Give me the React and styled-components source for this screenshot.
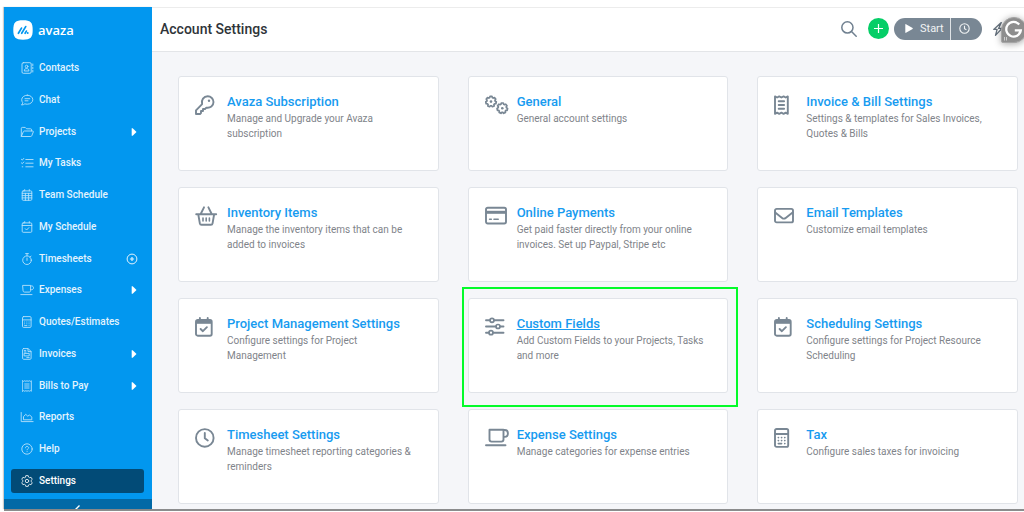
import React from 'react';
import styled, { createGlobalStyle } from 'styled-components';

const GlobalStyle = createGlobalStyle`
  *, *::before, *::after { box-sizing: border-box; }
  body {
    margin: 0;
    background: #ffffff;
    font-family: Roboto, "Liberation Sans", sans-serif;
  }
  button { font: inherit; border: 0; margin: 0; padding: 0; background: none; cursor: pointer; }
  a { text-decoration: none; }
  svg { display: block; flex: none; }
`;

/* ---------- Icons ---------- */

const gear = (cx, cy, outer, inner, teeth) => {
  const pts = [];
  for (let i = 0; i < teeth; i += 1) {
    const a = (i / teeth) * Math.PI * 2 - Math.PI / 2;
    const s = Math.PI / teeth;
    [[-0.72, inner], [-0.42, outer], [0.42, outer], [0.72, inner]].forEach(([k, r]) => {
      pts.push(`${(cx + Math.cos(a + k * s) * r).toFixed(2)} ${(cy + Math.sin(a + k * s) * r).toFixed(2)}`);
    });
  }
  return `M${pts.join('L')}Z`;
};

const NavSvg = styled.svg.attrs({ viewBox: '0 0 14 12', width: 14, height: 12, 'aria-hidden': true })`
  fill: none;
  stroke: #ffffff;
  stroke-width: 0.9;
  stroke-linecap: round;
  stroke-linejoin: round;
  opacity: ${(p) => (p.$bright ? 0.9 : 0.72)};
`;

const navIcons = {
  contacts: (
    <>
      <rect x="2" y="0.7" width="9.2" height="10.6" rx="1.3" />
      <path d="M12.8 2v1.6M12.8 5.2v1.6M12.8 8.4V10" />
      <circle cx="6.6" cy="4.5" r="1.3" />
      <path d="M4.3 8.6c0-1.6 1-2 2.3-2s2.3.4 2.3 2z" />
    </>
  ),
  chat: (
    <>
      <path d="M7.3 1.2c3.1 0 5.5 2 5.5 4.5s-2.4 4.5-5.5 4.5c-.9 0-1.7-.1-2.4-.4-.9.7-2 1.200-3.4 1.200.7-.7 1.200-1.500 1.300-2.300-.7-.8-1.100-1.800-1.100-3 0-2.500 2.500-4.500 5.600-4.500z" />
      <path d="M5 4.700h4.800M5 6.800h3" />
    </>
  ),
  projects: (
    <>
      <path d="M1.300 9.800V2.400c0-.6.4-1 1-1h2.900l1.400 1.400h4c.6 0 1 .4 1 1v1.100" />
      <path d="M1.400 10.300l2-4.700c.2-.4.5-.6.9-.6h8.200c.7 0 1 .5.800 1l-1.600 3.900c-.2.400-.5.6-.9.600H1.900c-.4 0-.6-.2-.5-.5z" />
    </>
  ),
  tasks: <path d="M1.400 2.300l.9.800 1.500-1.700M1.400 5.900l.9.800 1.500-1.700M2.200 9.800h.6M5.800 2.500h7.300M5.800 6.200h7.300M5.800 9.800h7.300" />,
  grid: (
    <>
      <rect x="2.200" y="1.900" width="9.600" height="9.400" rx="1" />
      <path d="M4.700.600v1.300M9.300.600v1.300M2.200 4.300h9.600M2.200 6.600h9.600M2.200 8.900h9.600M5.400 4.300v7M8.600 4.300v7" />
    </>
  ),
  calendar: (
    <>
      <rect x="2.200" y="1.900" width="9.600" height="9.400" rx="1" />
      <path d="M4.700.600v1.300M9.300.600v1.300M2.200 4.500h9.600M5.300 7.700l1.300 1.300 2.300-2.400" />
    </>
  ),
  stopwatch: (
    <>
      <circle cx="7" cy="7.200" r="4.300" />
      <path d="M5.600.600h2.800M7 .600v2.200M7 5v2.400M10.200 4l.8-.9" />
    </>
  ),
  cup: <path d="M3 1.400h7.600v5.200c0 .9-.6 1.500-1.500 1.500H4.500C3.600 8.100 3 7.500 3 6.600zM10.600 1.900h1c1.100 0 1.900.8 1.900 1.900s-.8 1.900-1.900 1.900h-1M.8 10.600h11.200" />,
  calculator: (
    <>
      <rect x="2.500" y=".6" width="8.600" height="10.800" rx="1.100" />
      <path d="M2.500 3.900h8.600M4.600 6h.1M6.800 6h.1M9 6h.1M4.600 7.800h.1M6.800 7.800h.1M9 7.800h.1M4.600 9.600h2.300M9 9.600h.1" />
    </>
  ),
  invoice: (
    <>
      <path d="M3.600.600h4.600l2.900 2.900v6.800c0 .6-.4 1-1 1H3.600c-.6 0-1-.4-1-1V1.600c0-.6.400-1 1-1z" />
      <path d="M8 .800v2.800h2.900M4.300 2.600h1.500M4.500 5.400h4.700v2.500H4.500zM6.800 9.600h2.400M4.500 4h1.500" />
    </>
  ),
  receipt: (
    <>
      <path d="M2.600.700l1.100.7 1.100-.7 1.100.7 1.100-.7 1.100.7 1.100-.7 1.100.7 1-.7v10.600l-1-.7-1.100.7-1.100-.7-1.100.7-1.100-.7-1.100.7-1.100-.7-1.100.7z" />
      <path d="M4.700 4h4.400M4.700 6h4.400M4.700 8h4.400" />
    </>
  ),
  chart: <path d="M1.200 1.500v9.100h11.900M3.500 8.400V5.700l2.200-2.400 2.100 1.900 1.800-1.300 2.200 2.200v2.300z" />,
  help: (
    <>
      <circle cx="7" cy="6" r="5.200" />
      <path d="M5.500 4.800c.1-.9.700-1.400 1.500-1.400s1.600.5 1.600 1.300c0 1-1.500 1.100-1.500 2.100M7.100 8.600v.1" />
    </>
  ),
  settings: (
    <>
      <path d={gear(7, 6, 5.5, 4.2, 6)} />
      <circle cx="7" cy="6" r="1.700" />
    </>
  ),
};

const CardSvg = styled.svg.attrs({ viewBox: '0 0 24 20', width: 24, height: 20, 'aria-hidden': true })`
  fill: none;
  stroke: #798794;
  stroke-width: 1.9;
  stroke-linecap: round;
  stroke-linejoin: round;
  margin-top: 2px;
`;

const cardIcons = {
  key: (
    <>
      <path d="M7.100 9.100C6 5 8.700 1.300 12.700 1.300c3.200 0 5.800 2.500 5.800 5.700 0 3.700-3.300 6.300-7.100 5.600L10 14H8v2H6v2l-1 1H1v-3.700z" />
      <circle cx="14" cy="5.800" r="1.200" fill="#798794" stroke="none" />
    </>
  ),
  gears: (
    <>
      <path d={gear(6, 6.6, 5.3, 4.2, 7)} strokeWidth="1.700" />
      <path d={gear(17.3, 13.2, 5.3, 4.2, 7)} strokeWidth="1.700" />
      <circle cx="6" cy="6.600" r="1.300" fill="#798794" stroke="none" />
      <circle cx="17.300" cy="13.200" r="1.300" fill="#798794" stroke="none" />
    </>
  ),
  receipt: (
    <>
      <path d="M1 1.400l2.100 1.100 2.100-1.100 2.200 1.100 2.200-1.100 2.100 1.100 2.100-1.100v17.400l-2.100-1.100-2.100 1.100-2.200-1.100-2.200 1.100-2.100-1.100L1 18.800z" />
      <path d="M4.700 6.300h5.400M4.700 10h5.400M4.700 13.700h5.400" />
    </>
  ),
  basket: (
    <>
      <path d="M1.200 8.200h20M3.300 8.500l1.500 8.700c.2 1 .8 1.500 1.700 1.500h9.400c.9 0 1.500-.5 1.700-1.500l1.500-8.700M5.700 8L9 1.300M16.700 8l-3.300-6.700" />
      <path d="M8 12v3M11.200 12v3M14.400 12v3" strokeWidth="1.600" />
    </>
  ),
  payment: (
    <>
      <rect x="1" y="1.700" width="20" height="15.800" rx="1.700" />
      <path d="M1 6.300h20" strokeWidth="3" strokeLinecap="butt" />
      <path d="M4.600 13.200h1.700M9 13.200h4.200" strokeWidth="1.600" />
    </>
  ),
  mail: (
    <>
      <rect x="1" y="2.900" width="18" height="13.500" rx="1.700" />
      <path d="M1.200 6.500l6.900 5.400c1.100.9 2.500.9 3.600 0l6.900-5.400" />
    </>
  ),
  calendar: (
    <>
      <rect x="1" y="3" width="15.700" height="15.700" rx="1.700" />
      <path d="M1 4.900h15.700" strokeWidth="3.800" strokeLinecap="butt" />
      <path d="M4.900 1v2M12.700 1v2" />
      <path d="M5.600 12l2.300 2.200 4-4" />
    </>
  ),
  sliders: (
    <>
      <path d="M1 3.300h3.900M9 3.300h9.500M1 9.500h9.900M15 9.500h3.500M1 15.700h3M8 15.700h10.500" />
      <circle cx="7" cy="3.300" r="2" strokeWidth="1.700" />
      <circle cx="13" cy="9.500" r="2" strokeWidth="1.700" />
      <circle cx="6" cy="15.700" r="2" strokeWidth="1.700" />
    </>
  ),
  clock: (
    <>
      <circle cx="9.800" cy="9.900" r="8.800" />
      <path d="M9.800 5v5.300l3 2.200" />
    </>
  ),
  cup: <path d="M4.500 1.700h14v9.800c0 1.200-.9 2.100-2.100 2.100H6.600c-1.200 0-2.100-.9-2.100-2.100zM18.500 2h1.200c1.900 0 3.200 1.300 3.200 3.300 0 2-1.300 3.600-3.200 3.600h-1.200M1 17.300h19.500" />,
  calculator: (
    <>
      <rect x="1" y="1" width="13.200" height="17.900" rx="1.600" />
      <path d="M1 6h13" />
      <path d="M4.300 9.600h.2M7.500 9.600h.2M10.700 9.600h.2M4.300 12.600h.2M7.500 12.600h.2M10.700 12.600h.2M4.300 15.600h3.300M10.700 15.600h.2" strokeWidth="1.600" />
    </>
  ),
};

/* ---------- Shell ---------- */

const Page = styled.div`
  min-height: 100vh;
  display: flex;
  flex-direction: column;
  padding: 7px 0 1px 4px;
`;

const Shell = styled.div`
  flex: 1;
  display: flex;
  background: #f5f6f9;
  border-bottom: 2px solid #8b8c8d;
`;

const Sidebar = styled.aside`
  flex: none;
  width: 148px;
  display: flex;
  flex-direction: column;
  background: #0297ef;
  box-shadow: -1px 0 1px rgba(0, 0, 0, 0.2);
`;

const Brand = styled.a`
  display: flex;
  align-items: center;
  gap: 5px;
  height: 45px;
  padding-left: 9px;
  color: #ffffff;
  font-family: "Open Sans", "Noto Sans", sans-serif;
  font-size: 13px;
  font-weight: 600;
  line-height: 16px;
`;

const Nav = styled.nav`
  flex: 1;
  display: flex;
  flex-direction: column;
  justify-content: space-between;
  padding: 4px 8px 6px 7px;
`;

const NavItem = styled.a`
  display: flex;
  align-items: center;
  gap: 5px;
  height: 24px;
  padding: 0 6px 0 9px;
  border-radius: 3px;
  background: ${(p) => (p.$active ? '#024b77' : 'transparent')};
  color: ${(p) => (p.$active ? '#ffffff' : '#e3f3fd')};
  font-size: 10px;
  font-weight: 500;
  line-height: 16px;
`;

const NavLabel = styled.span`
  flex: 1;
  white-space: nowrap;
`;

const Collapse = styled.button`
  display: flex;
  justify-content: center;
  height: 10px;
  padding-top: 6px;
  background: #0269a6;
  overflow: hidden;
`;

const Main = styled.div`
  flex: 1;
  min-width: 0;
  display: flex;
  flex-direction: column;
`;

const Header = styled.header`
  position: relative;
  display: flex;
  align-items: center;
  justify-content: space-between;
  height: 45px;
  padding: 0 20px 2px 8px;
  background: #ffffff;
  border-top: 1px solid #ececec;
  border-bottom: 1px solid #e3e5e8;
  overflow: hidden;
`;

const Title = styled.h1`
  margin: 0;
  color: #2f3439;
  font-size: 14px;
  font-weight: 500;
  line-height: 20px;
`;

const Tools = styled.div`
  display: flex;
  align-items: center;
`;

const SearchButton = styled.button`
  margin-right: 11px;
`;

const AddButton = styled.button`
  display: grid;
  place-items: center;
  width: 21px;
  height: 21px;
  margin-right: 5px;
  border-radius: 50%;
  background: #05ce67;
`;

const Timer = styled.div`
  display: flex;
  height: 22px;
  margin-right: 10px;
  border-radius: 11px;
  background: #798794;
  overflow: hidden;
`;

const StartButton = styled.button`
  display: flex;
  align-items: center;
  gap: 7px;
  width: 56px;
  padding-left: 11px;
  color: #f1f3f4;
  font-size: 11px;
  line-height: 16px;
`;

const TimerLog = styled.button`
  display: grid;
  place-items: center;
  width: 32px;
  padding-right: 4px;
  border-left: 1px solid #dfe3e6;
`;

const Badge = styled.button`
  position: absolute;
  top: 9px;
  right: -3px;
  width: 26px;
  height: 26px;
  border-radius: 13px 13px 13px 2px;
  background: #8e8e8e;
  border: 1px solid #a5a5a5;
  box-shadow: 0 1px 7px rgba(0, 0, 0, 0.35);
`;

const Cards = styled.main`
  display: grid;
  grid-template-columns: repeat(3, minmax(0, 1fr));
  grid-auto-rows: minmax(95px, auto);
  gap: 16px 29px;
  padding: 24px 6px 4px 26px;
`;

const CardBox = styled.article`
  position: relative;
  display: flex;
  padding: 16px 22px 16px 16px;
  background: #ffffff;
  border: 1px solid #e1e4e9;
  border-radius: 3px;
`;

const CardText = styled.div`
  flex: 1;
  min-width: 0;
  padding-left: 8px;
`;

const CardLink = styled.a`
  display: block;
  color: #179bf0;
  font-size: 13px;
  font-weight: 500;
  line-height: 18px;
  text-decoration: ${(p) => (p.$underlined ? 'underline' : 'none')};
`;

const CardNote = styled.p`
  margin: 0;
  color: #7f848a;
  font-size: 10px;
  line-height: 15px;
`;

const Highlight = styled.div`
  position: absolute;
  inset: -12px -11px -15px -7px;
  border: 2px solid #04fb2a;
  pointer-events: none;
`;

/* ---------- Content ---------- */

const navItems = [
  { label: 'Contacts', icon: 'contacts' },
  { label: 'Chat', icon: 'chat' },
  { label: 'Projects', icon: 'projects', end: 'arrow' },
  { label: 'My Tasks', icon: 'tasks' },
  { label: 'Team Schedule', icon: 'grid' },
  { label: 'My Schedule', icon: 'calendar' },
  { label: 'Timesheets', icon: 'stopwatch', end: 'plus' },
  { label: 'Expenses', icon: 'cup', end: 'arrow' },
  { label: 'Quotes/Estimates', icon: 'calculator' },
  { label: 'Invoices', icon: 'invoice', end: 'arrow' },
  { label: 'Bills to Pay', icon: 'receipt', end: 'arrow' },
  { label: 'Reports', icon: 'chart' },
  { label: 'Help', icon: 'help' },
  { label: 'Settings', icon: 'settings', active: true },
];

const cards = [
  { title: 'Avaza Subscription', note: 'Manage and Upgrade your Avaza subscription', icon: 'key' },
  { title: 'General', note: 'General account settings', icon: 'gears' },
  { title: 'Invoice & Bill Settings', note: 'Settings & templates for Sales Invoices, Quotes & Bills', icon: 'receipt' },
  { title: 'Inventory Items', note: 'Manage the inventory items that can be added to invoices', icon: 'basket' },
  { title: 'Online Payments', note: 'Get paid faster directly from your online invoices. Set up Paypal, Stripe etc', icon: 'payment' },
  { title: 'Email Templates', note: 'Customize email templates', icon: 'mail' },
  { title: 'Project Management Settings', note: 'Configure settings for Project Management', icon: 'calendar' },
  { title: 'Custom Fields', note: 'Add Custom Fields to your Projects, Tasks and more', icon: 'sliders', highlighted: true },
  { title: 'Scheduling Settings', note: 'Configure settings for Project Resource Scheduling', icon: 'calendar' },
  { title: 'Timesheet Settings', note: 'Manage timesheet reporting categories & reminders', icon: 'clock' },
  { title: 'Expense Settings', note: 'Manage categories for expense entries', icon: 'cup' },
  { title: 'Tax', note: 'Configure sales taxes for invoicing', icon: 'calculator' },
];

function NavEnd({ kind }) {
  if (kind === 'plus') {
    return (
      <svg width="12" height="12" viewBox="0 0 12 12" fill="none" stroke="#e3f3fd" aria-hidden="true">
        <circle cx="6" cy="6" r="4.900" />
        <path d="M6 3.900v4.200M3.900 6h4.200" strokeWidth="1.200" />
      </svg>
    );
  }
  if (kind === 'arrow') {
    return (
      <svg width="10" height="8" viewBox="0 0 10 8" fill="#ffffff" aria-hidden="true">
        <path d="M3.700.2h1L8.500 4 4.700 7.800h-1z" />
      </svg>
    );
  }
  return null;
}

export default function App() {
  return (
    <Page>
      <GlobalStyle />
      <Shell>
        <Sidebar>
          <Brand href="#home">
            <svg width="20" height="20" viewBox="0 0 20 20" aria-hidden="true">
              <path d="M10 .3c7.500 0 9.700 2.200 9.700 9.700s-2.200 9.700-9.700 9.700S.3 17.500.3 10 2.500.3 10 .3z" fill="#ffffff" />
              <path d="M5.400 13.300l3.100-5.200M8.700 13.300l4-6.700M12.100 13.300l1.300-2.200" stroke="#0297ef" strokeWidth="1.700" strokeLinecap="round" />
              <circle cx="14.700" cy="13" r="1" fill="#0297ef" />
            </svg>
            avaza
          </Brand>
          <Nav aria-label="Main">
            {navItems.map((item) => (
              <NavItem key={item.label} href={`#${item.icon}`} $active={item.active}>
                <NavSvg $bright={item.active}>{navIcons[item.icon]}</NavSvg>
                <NavLabel>{item.label}</NavLabel>
                <NavEnd kind={item.end} />
              </NavItem>
            ))}
          </Nav>
          <Collapse aria-label="Collapse sidebar">
            <svg width="8" height="8" viewBox="0 0 8 8" fill="none" stroke="#ffffff" strokeWidth="1.400">
              <path d="M5.500.500L2 4l3.500 3.500" />
            </svg>
          </Collapse>
        </Sidebar>
        <Main>
          <Header>
            <Title>Account Settings</Title>
            <Tools>
              <SearchButton aria-label="Search">
                <svg width="16" height="16" viewBox="0 0 16 16" fill="none" stroke="#708090" strokeWidth="1.500" strokeLinecap="round">
                  <circle cx="6.400" cy="6.400" r="5.600" />
                  <path d="M10.500 10.500l4.700 4.700" />
                </svg>
              </SearchButton>
              <AddButton aria-label="Add">
                <svg width="9" height="9" viewBox="0 0 9 9" stroke="#ffffff" strokeWidth="1.200">
                  <path d="M4.500 0v9M0 4.500h9" />
                </svg>
              </AddButton>
              <Timer>
                <StartButton>
                  <svg width="8" height="9" viewBox="0 0 8 9" fill="#ffffff" aria-hidden="true">
                    <path d="M.3.600C.300.200.700 0 1 .200l6.600 3.900c.3.200.3.600 0 .8L1 8.800c-.3.200-.7 0-.7-.4z" />
                  </svg>
                  Start
                </StartButton>
                <TimerLog aria-label="Timer history">
                  <svg width="11" height="11" viewBox="0 0 11 11" fill="none" stroke="#f1f3f4" strokeWidth="1.100">
                    <circle cx="5.500" cy="5.500" r="4.700" />
                    <path d="M5.500 2.700v3l1.900 1" />
                  </svg>
                </TimerLog>
              </Timer>
              <svg width="12" height="18" viewBox="0 0 12 18" fill="none" stroke="#66727e" strokeWidth="1.300" strokeLinejoin="round" aria-hidden="true">
                <path d="M9.300 2.600L1.700 9.400h3.400L3.500 15.400l6.500-7H6.600z" />
              </svg>
            </Tools>
            <Badge aria-label="Writing assistant">
              <svg width="24" height="24" viewBox="0 0 24 24" fill="none" stroke="#ffffff">
                <path d="M17.200 6.600A7.300 7.300 0 1 0 18.800 12.400H12.800M18.800 12.400l-2 4.200" strokeWidth="2.300" />
                <path d="M2.500 19v3.500M4.500 19v3.500" strokeWidth=".8" opacity=".7" />
              </svg>
            </Badge>
          </Header>
          <Cards>
            {cards.map((card) => (
              <CardBox key={card.title}>
                <CardSvg>{cardIcons[card.icon]}</CardSvg>
                <CardText>
                  <CardLink href="#settings" $underlined={card.highlighted}>{card.title}</CardLink>
                  <CardNote>{card.note}</CardNote>
                </CardText>
                {card.highlighted && <Highlight />}
              </CardBox>
            ))}
          </Cards>
        </Main>
      </Shell>
    </Page>
  );
}
